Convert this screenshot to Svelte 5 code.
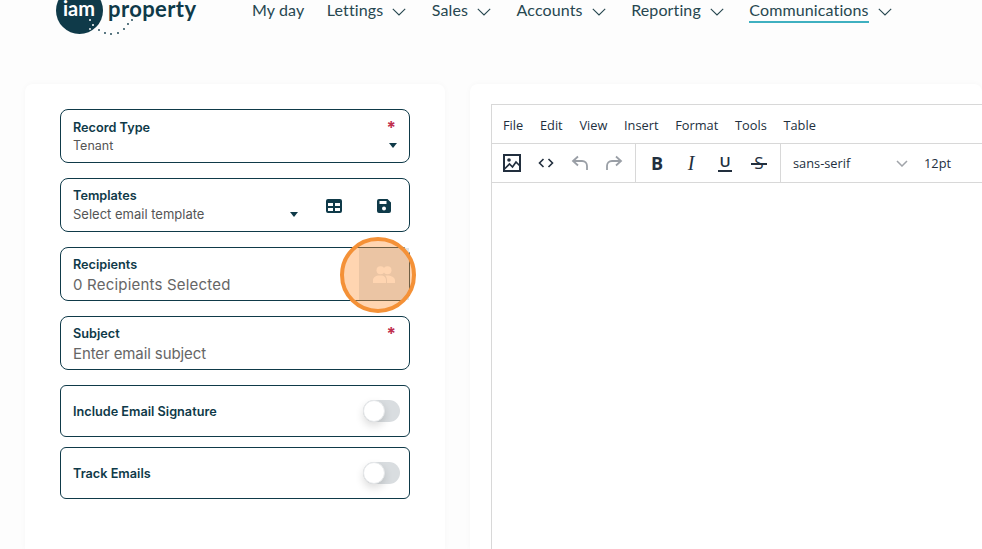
<script>
  const nav = [
    { label: 'My day' },
    { label: 'Lettings', caret: true },
    { label: 'Sales', caret: true },
    { label: 'Accounts', caret: true },
    { label: 'Reporting', caret: true },
    { label: 'Communications', caret: true, active: true }
  ];
  const menus = ['File', 'Edit', 'View', 'Insert', 'Format', 'Tools', 'Table'];
</script>

<div class="page">
  <header class="top">
    <div class="logo">
      <svg width="80" height="40" viewBox="0 0 80 40">
        <circle cx="23.500" cy="10.500" r="23.500" fill="#0f3a49" />
        <g fill="#fff">
          <circle cx="34" cy="20" r="1" /><circle cx="37" cy="25" r="1" /><circle cx="34" cy="29" r=".9" />
        </g>
        <g fill="#0f3a49">
          <circle cx="43" cy="30" r=".9" /><circle cx="49" cy="33" r=".9" /><circle cx="55" cy="34" r=".9" />
          <circle cx="62" cy="33" r=".9" /><circle cx="68" cy="29" r=".9" /><circle cx="72" cy="24" r=".9" />
          <circle cx="76" cy="20" r=".9" />
        </g>
      </svg>
      <span class="iam">iam</span>
      <span class="prop">property</span>
    </div>
    <nav class="nav">
      {#each nav as item}
        <div class="nav-item">
          <span class="nav-label" class:active={item.active}>{item.label}</span>
          {#if item.caret}
            <svg class="caret" width="14" height="8" viewBox="0 0 14 8"><path d="M.8.8 7 7 13.200.8" fill="none" stroke="#274750" stroke-width="1.100" /></svg>
          {/if}
        </div>
      {/each}
    </nav>
  </header>

  <main class="content">
    <section class="card form">
      <div class="field">
        <div class="row"><span class="label">Record Type</span><span class="req">*</span></div>
        <div class="row"><span class="value small tenant">Tenant</span><span class="tri"></span></div>
      </div>

      <div class="field templates">
        <div class="stack">
          <span class="label">Templates</span>
          <div class="row"><span class="value small">Select email template</span><span class="tri"></span></div>
        </div>
        <svg class="ico first" width="16" height="14" viewBox="0 0 16 14"><path fill="#0f3a49" fill-rule="evenodd" d="M2 0h12a2 2 0 0 1 2 2v10a2 2 0 0 1-2 2H2a2 2 0 0 1-2-2V2a2 2 0 0 1 2-2Zm0 4v3h5V4Zm7 0v3h5V4ZM2 9v3h5V9Zm7 0v3h5V9Z" /></svg>
        <svg class="ico" width="14" height="14" viewBox="0 0 14 14"><path fill="#0f3a49" fill-rule="evenodd" d="M2 0h8.500L14 3.500V12a2 2 0 0 1-2 2H2a2 2 0 0 1-2-2V2a2 2 0 0 1 2-2Zm.5 2v3h7V2ZM7 7.500a2 2 0 1 0 0 4 2 2 0 0 0 0-4Z" /></svg>
      </div>

      <div class="field recipients">
        <div class="stack">
          <span class="label">Recipients</span>
          <span class="value">0 Recipients Selected</span>
        </div>
        <div class="add">
          <svg width="22" height="17" viewBox="0 0 22 17"><g fill="#fff"><circle cx="7.500" cy="4.300" r="4" /><circle cx="14.500" cy="4.300" r="4" /><path d="M0 17v-2.500C0 11 3 9.500 6 9.500h2c3 0 5 1.500 5 5V17Zm14 0v-2.500c0-2-.6-3.700-1.700-5h1.700c4 0 8 1.500 8 5V17Z" /></g></svg>
        </div>
        <div class="spot"></div>
      </div>

      <div class="field subject">
        <div class="row"><span class="label">Subject</span><span class="req">*</span></div>
        <span class="value">Enter email subject</span>
      </div>

      <div class="field switch-field tall">
        <span class="label">Include Email Signature</span>
        <span class="switch"><span class="knob"></span></span>
      </div>

      <div class="field switch-field">
        <span class="label">Track Emails</span>
        <span class="switch"><span class="knob"></span></span>
      </div>
    </section>

    <section class="card editor-card">
      <div class="editor">
        <div class="menubar">
          {#each menus as m}<span>{m}</span>{/each}
        </div>
        <div class="toolbar">
          <div class="group g1">
            <svg width="18" height="18" viewBox="0 0 18 18" fill="none" stroke="#222f3e" stroke-width="2"><rect x="1" y="1" width="16" height="16" /><circle cx="6" cy="6" r="1.800" fill="#222f3e" stroke="none" /><path d="M1.500 15l5-5 3 3 3.500-5 4 4" stroke-width="1.700" /></svg>
            <svg width="16" height="10" viewBox="0 0 16 10" fill="none" stroke="#222f3e" stroke-width="1.600"><path d="M5.500 1 1.500 5l4 4M10.500 1l4 4-4 4" /></svg>
            <svg width="18" height="16" viewBox="0 0 18 16" fill="none" stroke="#9a9fa6" stroke-width="1.800"><path d="M7 1.500 2 6l5 4.500M2 6h9c3 0 5 2.200 5 5v4" /></svg>
            <svg class="redo" width="18" height="16" viewBox="0 0 18 16" fill="none" stroke="#9a9fa6" stroke-width="1.800"><path d="M11 1.500 16 6l-5 4.500M16 6H7c-3 0-5 2.200-5 5v4" /></svg>
          </div>
          <div class="group g2">
            <span class="b">B</span>
            <span class="i">I</span>
            <span class="u">U</span>
            <span class="s">S</span>
          </div>
          <div class="group g3">
            <span class="font">sans-serif</span>
            <svg width="12" height="7" viewBox="0 0 12 7"><path d="M1 1l5 5 5-5" fill="none" stroke="#a0a4a9" stroke-width="1.500" /></svg>
            <span class="size">12pt</span>
          </div>
        </div>
      </div>
    </section>
  </main>
</div>

<style>
  :global(body) { margin: 0; background: #fdfdfd; overflow: hidden; }
  .page { width: 982px; height: 549px; overflow: hidden; font-family: Inter, sans-serif; color: #0f3a49; }

  .top { display: flex; height: 84px; padding-left: 56px; box-sizing: border-box; }
  .logo { width: 196px; height: 40px; position: relative; flex: none; }
  .logo svg { display: block; }
  .iam { position: absolute; left: 7px; top: 0; font: 700 20px/16px Lato, sans-serif; color: #fff; }
  .prop { position: absolute; left: 52px; top: 0; font: 700 22px/18px Lato, sans-serif; color: #0f3a49; letter-spacing: .4px; }

  .nav { display: flex; align-items: flex-start; gap: 25.500px; font-size: 16px; font-family: Lato, sans-serif; letter-spacing: .12px; }
  .nav-item { display: flex; gap: 9px; height: 23px; align-items: flex-start; color: #274750; }
  .nav-item:first-child { margin-right: -3px; }
  .nav-label { height: 21px; line-height: 20px; display: block; }
  .nav-label.active { border-bottom: 2px solid #3fb0c0; }
  .caret { margin-top: 8px; }

  .content { display: flex; gap: 25px; padding-left: 25px; }
  .card { background: #fff; border-radius: 8px 8px 0 0; height: 465px; box-sizing: border-box; box-shadow: 0 0 6px rgba(0, 0, 0, .03); }
  .form { width: 420px; padding: 25px 35px; display: flex; flex-direction: column; gap: 15px; }
  .editor-card { flex: 1; padding: 20px 0 0 21px; }

  .field { height: 54px; box-sizing: border-box; border: 1px solid #0f3a49; border-radius: 8px; padding: 9px 12px 0; position: relative; display: flex; flex-direction: column; flex: none; }
  .row { display: flex; justify-content: space-between; align-items: center; }
  .stack { display: flex; flex-direction: column; flex: 1; }
  .stack > .label { margin: -1px 0 1px; }
  .label { font-size: 12.700px; font-weight: 600; line-height: 17px; color: #0f3a49; }
  .value { font-size: 15px; line-height: 21px; color: #666; }
  .value.small { font-size: 13px; line-height: 19px; color: #555; }
  .value.tenant { font-size: 12.500px; }
  .req { color: #c0304f; font-size: 17px; line-height: 14px; font-weight: 700; margin-right: 1px; }
  .tri { width: 0; height: 0; border-left: 4.500px solid transparent; border-right: 4.500px solid transparent; border-top: 5px solid #0f3a49; }

  .templates { flex-direction: row; align-items: center; padding: 0 18px 0 12px; }
  .templates .stack { padding-top: 1px; }
  .ico { flex: none; margin-left: 35px; margin-top: 2px; }
  .ico.first { margin-left: 28px; }

  .recipients { flex-direction: row; padding: 0 0 0 12px; align-items: center; }
  .recipients .stack { padding-top: 3px; }
  .recipients .value { letter-spacing: .2px; }
  .add { width: 50px; height: 52px; background: #dee4e9; display: flex; align-items: center; justify-content: center; flex: none; }
  .spot { position: absolute; left: 279px; top: -11px; width: 76px; height: 76px; box-sizing: border-box; border: 4px solid #f49137; border-radius: 50%; background: rgba(255, 150, 60, .4); }

  .subject { padding-top: 8px; }
  .subject .value { padding-top: 1px; letter-spacing: -.1px; }

  .switch-field { flex-direction: row; align-items: center; justify-content: space-between; height: 52px; padding: 0 9px 0 12px; border-radius: 6px; }
  .tall { margin-bottom: -5px; }
  .switch { width: 37px; height: 22px; border-radius: 11px; background: #d9dde0; display: block; position: relative; }
  .knob { position: absolute; left: 0; top: 0; width: 22px; height: 22px; box-sizing: border-box; border: 1px solid #e6e8ea; border-radius: 50%; background: #fff; box-shadow: 0 4px 8px rgba(0, 0, 0, .14); }

  .editor { border: 1px solid #d8d8d8; border-right: 0; border-bottom: 0; height: 445px; font-family: "Open Sans", sans-serif; color: #222f3e; font-size: 12.800px; }
  .menubar { height: 39px; display: flex; align-items: center; gap: 16.700px; padding: 2px 0 0 11px; border-bottom: 1px solid #d8d8d8; box-sizing: border-box; }
  .toolbar { height: 39px; display: flex; border-bottom: 1px solid #d8d8d8; box-sizing: border-box; }
  .group { display: flex; align-items: center; height: 100%; border-right: 1px solid #d8d8d8; box-sizing: border-box; }
  .g1 { width: 144px; padding-left: 11px; gap: 17px; }
  .redo { margin-left: -1px; }
  .g2 { width: 145px; padding-left: 4px; font-size: 18px; }
  .g2 span { width: 34px; text-align: center; box-sizing: border-box; position: relative; line-height: 20px; }
  .b { font-weight: 700; }
  .i { font-family: "Liberation Serif", serif; font-style: italic; font-size: 20px; }
  .u { font-weight: 600; font-size: 15px; top: -2px; }
  .u::after { content: ""; position: absolute; left: 10px; right: 10px; bottom: -1px; height: 2px; background: #222f3e; }
  .s { font-size: 17px; }
  .s::after { content: ""; position: absolute; left: 9px; right: 9px; top: 10px; height: 1.500px; background: #222f3e; }
  .g3 { border: 0; padding-left: 12px; }
  .font { width: 103px; }
  .size { margin-left: 16px; }
</style>
